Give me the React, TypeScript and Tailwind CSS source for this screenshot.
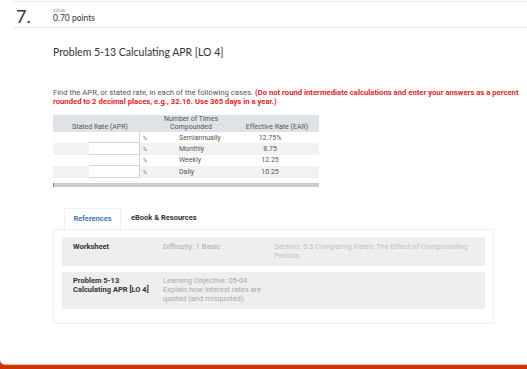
const rows = [
  { freq: 'Semiannually', ear: '12.75%', shade: false },
  { freq: 'Monthly', ear: '8.75', shade: true },
  { freq: 'Weekly', ear: '12.25', shade: false },
  { freq: 'Daily', ear: '10.25', shade: true },
];

export default function App() {
  return (
    <div className="w-[527px] h-[369px] overflow-hidden bg-[#c93508] font-['Roboto',sans-serif]">
      <div className="h-[365px] bg-white rounded-bl-[5px] border-b border-[#f1b79a] pt-px">
        {/* Question header */}
        <div className="ml-[13px] h-[27px] border-y border-[#ececec] flex">
          <div className="w-[40px] pl-[3px] text-[18px] leading-[20px] text-[#333] pt-[4px] font-['Lato',sans-serif]">7.</div>
          <div className="pt-[5px] font-['Lato',sans-serif]">
            <div className="text-[5px] leading-[6px] text-[#999]">value:</div>
            <div className="text-[8.5px] leading-[11px] text-[#333]">0.70 points</div>
          </div>
        </div>

        <div className="pl-[53px]">
          <h2 className="mt-[18px] text-[10.5px] leading-[12px] text-[#333] font-['Lato',sans-serif]">
            Problem 5-13 Calculating APR [LO 4]
          </h2>

          <p className="mt-[30px] text-[7.7px] leading-[9px] text-[#555] pr-[4px]">
            Find the APR, or stated rate, in each of the following cases.{' '}
            <span className="font-bold text-[#e0242c]">
              (Do not round intermediate calculations and enter your answers as a percent rounded to 2 decimal
              places, e.g., 32.16. Use 365 days in a year.)
            </span>
          </p>

          {/* Table */}
          <div className="mt-[9px] w-[266px] text-[7px] text-[#555]">
            <div className="grid grid-cols-[94px_88px_84px] bg-[#dfe3e8] h-[17px] items-end pb-[1px] leading-[8px]">
              <div className="text-center">Stated Rate (APR)</div>
              <div className="text-center">
                Number of Times
                <br />
                Compounded
              </div>
              <div className="text-center">Effective Rate (EAR)</div>
            </div>
            {rows.map((r) => (
              <div
                key={r.freq}
                className={`grid grid-cols-[36px_51px_39px_58px_66px_16px] h-[11.4px] items-center leading-[8px] ${
                  r.shade ? 'bg-[#f2f2f2]' : 'bg-white'
                }`}
              >
                <div />
                <div className="h-full bg-white border-r border-b border-[#d4d4d4]" />
                <div className="pl-[3px] text-[5.5px] text-[#777]">%</div>
                <div>{r.freq}</div>
                <div className="text-center">{r.ear}</div>
                <div />
              </div>
            ))}
            <div className="mt-[5px] h-[4px] bg-[#c8ccd2] border-l border-[#888]" />
          </div>

          {/* Tabs */}
          <div className="mt-[21px] w-[441px]">
            <div className="flex text-[7.5px] font-bold leading-[8px]">
              <div className="ml-[11px] w-[57px] h-[21px] flex items-center justify-center bg-white border-t border-x border-[#f0f0f0] text-[#4d77a8] relative -mb-px">
                References
              </div>
              <div className="ml-[10px] h-[21px] flex items-center text-[#333]">eBook &amp; Resources</div>
            </div>
            <div className="border border-[#f0f0f0] px-[8px] pt-[7px] pb-[14px] flex flex-col gap-[6px]">
              <div className="bg-[#eeeeee] h-[29px] flex pt-[5px] text-[7.5px] leading-[9px]">
                <div className="w-[101px] pl-[11px] font-bold text-[#333]">Worksheet</div>
                <div className="w-[111px] text-[#aaa]">Difficulty: 1 Basic</div>
                <div className="w-[205px] text-[#c2c2c2]">
                  Section: 5.3 Comparing Rates: The Effect of Compounding Periods
                </div>
              </div>
              <div className="bg-[#eeeeee] h-[37px] flex pt-[4px] text-[7.5px] leading-[9px]">
                <div className="w-[101px] pl-[11px] font-bold text-[#333]">
                  Problem 5-13
                  <br />
                  Calculating APR [LO 4]
                </div>
                <div className="w-[111px] text-[#aaa]">
                  Learning Objective: 05-04
                  <br />
                  Explain how interest rates are
                  <br />
                  quoted (and misquoted).
                </div>
              </div>
            </div>
          </div>
        </div>
      </div>
    </div>
  );
}
